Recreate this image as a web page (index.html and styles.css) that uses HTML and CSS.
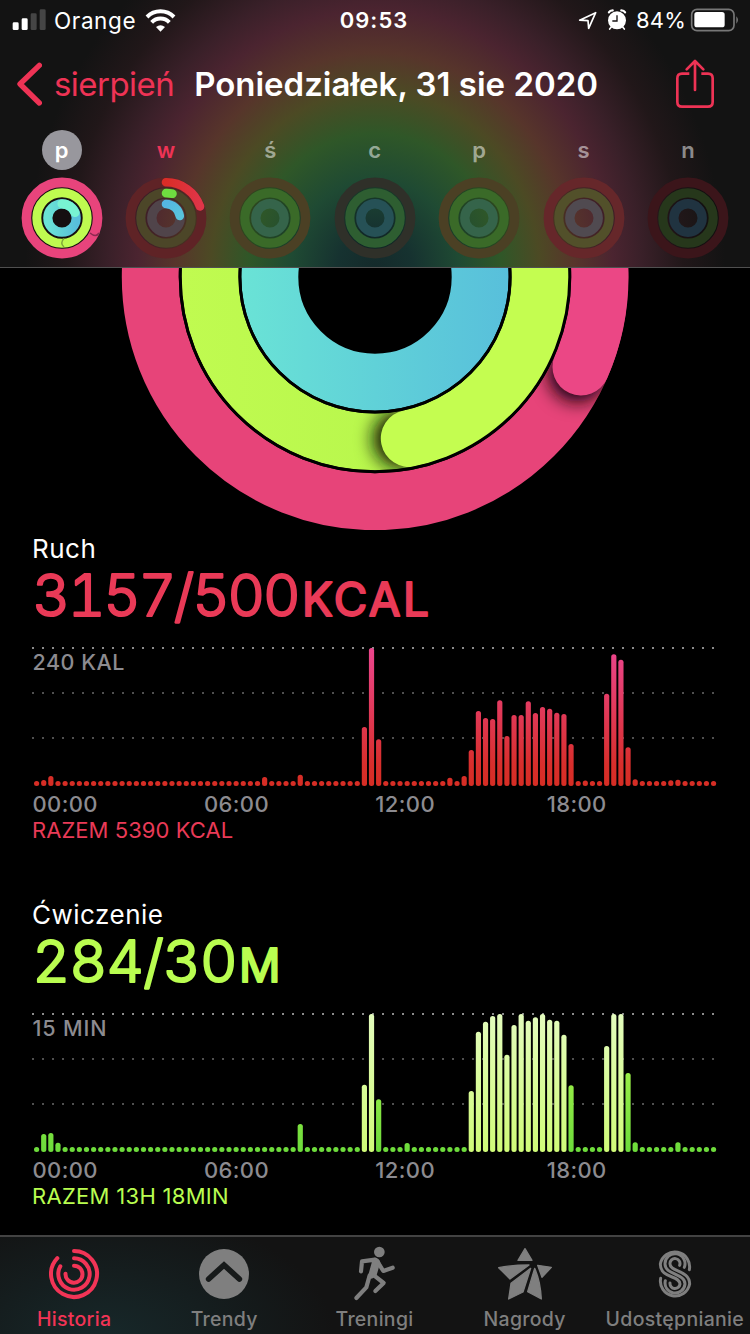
FILE: index.html
```html
<!DOCTYPE html>
<html lang="pl">
<head>
<meta charset="utf-8">
<title>Aktywność</title>
<link rel="stylesheet" href="styles.css">
</head>
<body>
<svg class="defs" width="0" height="0" aria-hidden="true">
  <symbol id="ring-empty" viewBox="0 0 82 82">
    <g fill="none">
      <circle cx="41" cy="41" r="25" stroke="#000" stroke-opacity=".16" stroke-width="22"/>
      <circle class="r-move" cx="41" cy="41" r="35.6" stroke-width="9.6"/>
      <circle class="r-exercise" cx="41" cy="41" r="25.2" stroke-width="9.200"/>
      <circle class="r-stand" cx="41" cy="41" r="14.2" stroke-width="9.400"/>
    </g>
  </symbol>
</svg>
<div class="screen">
  <header class="header">
    <div class="status">
      <div class="status-left">
        <svg width="34" height="22" viewBox="0 0 102 66"><g fill="#fff"><rect x="2" y="40" width="18" height="23" rx="4"/><rect x="29" y="28" width="18" height="35" rx="4"/></g><g fill="#454545"><rect x="56" y="13" width="18" height="50" rx="4"/><rect x="83" y="1" width="18" height="62" rx="4"/></g></svg>
        <span class="carrier">Orange</span>
        <svg class="wifi" width="31" height="23" viewBox="0 0 93 69"><g fill="none" stroke="#fff" stroke-width="12"><path d="M6 24A57 57 0 0 1 87 24"/><path d="M20 40A37 37 0 0 1 73 40"/></g><path fill="#fff" d="M33 54Q46.500 43 60 54L46.500 68Z"/></svg>
      </div>
      <span class="clock">09:53</span>
      <div class="status-right">
        <svg width="20" height="22" viewBox="0 0 60 66"><path d="M5 33.500L53 11L32 58L30 35Z" fill="none" stroke="#fff" stroke-width="5" stroke-linejoin="round"/></svg>
        <svg class="alarm" width="20" height="22" viewBox="0 0 60 66"><g fill="none" stroke="#fff" stroke-linecap="round"><path d="M6 10Q9 4 17 4M54 10Q51 4 43 4" stroke-width="7"/><path d="M13 54L8 60M47 54L52 60" stroke-width="5"/></g><circle cx="30" cy="34" r="27" fill="#fff"/><path d="M30 19V36H16" fill="none" stroke="#171314" stroke-width="4"/></svg>
        <span class="percent">84%</span>
        <svg class="battery" width="50" height="24" viewBox="0 0 150 72"><rect x="5" y="4" width="127" height="64" rx="16" fill="none" stroke="#777" stroke-width="5"/><rect x="13" y="12" width="91" height="46" rx="8" fill="#fff"/><path d="M139 25Q149 36 139 47Z" fill="#777"/></svg>
      </div>
    </div>
    <nav class="nav">
      <a class="back"><svg width="26" height="44" viewBox="0 0 78 132"><path d="M70 10L12 66L70 123" fill="none" stroke="currentColor" stroke-width="16" stroke-linecap="round" stroke-linejoin="round"/></svg><span>sierpień</span></a>
      <h1 class="title">Poniedziałek, 31 sie 2020</h1>
      <svg class="share" width="40" height="50" viewBox="0 0 120 150"><g fill="none" stroke="currentColor" stroke-width="8" stroke-linejoin="round"><path d="M43 44H21Q7 44 7 58V129Q7 143 21 143H99Q113 143 113 129V58Q113 44 99 44H79"/><path d="M60 93V8M35 31L60 6L85 31" stroke-linecap="round"/></g></svg>
    </nav>
    <div class="week">
      <div class="day selected"><span class="letter">p</span>
        <svg width="82" height="82" viewBox="0 0 82 82"><circle cx="41" cy="41" r="39" fill="#150f11"/><g fill="none"><circle cx="41" cy="41" r="35.600" stroke="#e8447c" stroke-width="9.600"/><circle cx="41" cy="41" r="25.200" stroke="#bffb50" stroke-width="9"/><circle cx="41" cy="41" r="14.200" stroke="url(#cyan-small)" stroke-width="9.200"/><path d="M69 56Q75 61 78 56" stroke="#8b2a50" stroke-width="1.500"/><path d="M43 61.500Q38.500 66 43 70" stroke="#7fa53b" stroke-width="1.500"/><path d="M41 26.800A14.200 14.200 0 0 1 54 35.500" stroke="#78f3d2" stroke-width="9.200" stroke-linecap="round"/></g></svg>
      </div>
      <div class="day today"><span class="letter">w</span>
        <svg width="82" height="82" viewBox="0 0 82 82"><use href="#ring-empty"/><g fill="none" stroke-linecap="round" stroke-width="8.600"><path d="M41 5.300A35.700 35.700 0 0 1 75 29.500" stroke="url(#red-small)"/><path d="M41 16.100A25 25 0 0 1 47.500 16.800" stroke="#6fdd40"/><path d="M41 27A14.200 14.200 0 0 1 54.800 39" stroke="url(#blue-small)"/></g></svg>
      </div>
      <div class="day green"><span class="letter">ś</span><svg width="82" height="82"><use href="#ring-empty"/></svg></div>
      <div class="day teal"><span class="letter">c</span><svg width="82" height="82"><use href="#ring-empty"/></svg></div>
      <div class="day green"><span class="letter">p</span><svg width="82" height="82"><use href="#ring-empty"/></svg></div>
      <div class="day plum"><span class="letter">s</span><svg width="82" height="82"><use href="#ring-empty"/></svg></div>
      <div class="day dark"><span class="letter">n</span><svg width="82" height="82"><use href="#ring-empty"/></svg></div>
    </div>
  </header>

  <main class="content">
    <svg class="rings" width="750" height="262" viewBox="0 268 750 262">
      <defs>
        <linearGradient id="cyan" x1="240" x2="510" y1="0" y2="0" gradientUnits="userSpaceOnUse"><stop offset="0" stop-color="#6ae3d6"/><stop offset=".5" stop-color="#60d1d8"/><stop offset="1" stop-color="#58bfdb"/></linearGradient>
        <linearGradient id="cyan-small" x1="0" x2="1" y1="0" y2="0"><stop offset="0" stop-color="#6ae3d6"/><stop offset="1" stop-color="#58bfdb"/></linearGradient>
        <linearGradient id="red-small" x1="0" x2="1" y1="0" y2="0"><stop offset="0" stop-color="#d92d27"/><stop offset="1" stop-color="#e03548"/></linearGradient>
        <linearGradient id="blue-small" x1="0" x2="1" y1="0" y2="1"><stop offset="0" stop-color="#54b6e2"/><stop offset="1" stop-color="#58c4dc"/></linearGradient>
        <linearGradient id="lime" x1="180" x2="440" y1="0" y2="0" gradientUnits="userSpaceOnUse"><stop offset="0" stop-color="#c0fb50"/><stop offset="1" stop-color="#b7f64c"/></linearGradient>
        <linearGradient id="move-bar" x1="0" x2="0" y1="154" y2="16" gradientUnits="userSpaceOnUse"><stop offset="0" stop-color="#d62d24"/><stop offset=".15" stop-color="#d82e2b"/><stop offset="1" stop-color="#ec468e"/></linearGradient>
        <linearGradient id="exercise-bar" x1="0" x2="0" y1="154" y2="16" gradientUnits="userSpaceOnUse"><stop offset="0" stop-color="#6cdb3b"/><stop offset=".6" stop-color="#9cef48"/><stop offset="1" stop-color="#baff4e"/></linearGradient>
        <linearGradient id="exercise-full" x1="0" x2="0" y1="154" y2="16" gradientUnits="userSpaceOnUse"><stop offset="0" stop-color="#d0fb78"/><stop offset="1" stop-color="#e3fcbd"/></linearGradient>
        <filter id="blur" x="-100%" y="-100%" width="300%" height="300%"><feGaussianBlur stdDeviation="9"/></filter>
        <mask id="move-band" maskUnits="userSpaceOnUse" x="100" y="0" width="550" height="550"><circle cx="375" cy="277" r="224.700" fill="none" stroke="#fff" stroke-width="57"/></mask>
        <mask id="exercise-band" maskUnits="userSpaceOnUse" x="100" y="0" width="550" height="550"><circle cx="375" cy="277" r="165" fill="none" stroke="#fff" stroke-width="57"/></mask>
      </defs>
      <g fill="none" stroke-width="57">
        <circle cx="375" cy="277" r="224.700" stroke="#e74479"/>
        <g mask="url(#move-band)"><circle cx="577.500" cy="373" r="29" fill="#16000a" filter="url(#blur)"/></g>
        <path d="M599.500 262A224.700 224.700 0 0 1 581 367" stroke="#eb4785" stroke-linecap="round"/>
        <circle cx="375" cy="277" r="165" stroke="url(#lime)"/>
        <g mask="url(#exercise-band)"><circle cx="402" cy="439" r="29" fill="#0d1400" filter="url(#blur)"/></g>
        <path d="M540 262A165 165 0 0 1 409.300 438.400" stroke="#c4fd50" stroke-linecap="round"/>
        <circle cx="375" cy="277" r="105.200" stroke="url(#cyan)"/>
        <g stroke="#000" stroke-width="3"><circle cx="375" cy="277" r="194.800"/><circle cx="375" cy="277" r="135.100"/></g>
      </g>
    </svg>

    <section class="metric move">
      <h2 class="name">Ruch</h2>
      <svg class="value" width="686" height="70"><text class="digits" x="0.500" y="54" textLength="268">3157/500</text><text class="unit" x="270" y="54" textLength="127">KCAL</text></svg>
      <svg class="chart" width="686" height="160" data-series="move"><g class="grid"></g><text class="scale" x="0.500" y="37.700" textLength="92">240 KAL</text><g class="bars"></g></svg>
      <div class="axis"><span>00:00</span><span>06:00</span><span>12:00</span><span>18:00</span></div>
      <p class="total">RAZEM 5390 KCAL</p>
    </section>

    <section class="metric exercise">
      <h2 class="name">Ćwiczenie</h2>
      <svg class="value" width="686" height="70"><text class="digits" x="0.500" y="54" textLength="205">284/30</text><text class="unit" x="207" y="54">M</text></svg>
      <svg class="chart" width="686" height="160" data-series="exercise"><g class="grid"></g><text class="scale" x="0.500" y="37.700" textLength="74">15 MIN</text><g class="bars"></g></svg>
      <div class="axis"><span>00:00</span><span>06:00</span><span>12:00</span><span>18:00</span></div>
      <p class="total wide">RAZEM 13H 18MIN</p>
    </section>
  </main>

  <footer class="tabs">
    <div class="tab active"><svg width="54" height="54" viewBox="0 0 162 162"><g fill="none" stroke="currentColor" stroke-width="12" stroke-linecap="round"><path d="M81 12A69 69 0 1 1 31 33.500"/><path d="M81 34A47 47 0 1 1 40 58"/><path d="M81 56A25.500 25.500 0 1 1 55.500 80"/></g></svg><span>Historia</span></div>
    <div class="tab"><svg width="54" height="54" viewBox="0 0 162 162"><circle cx="81" cy="81" r="75" fill="currentColor"/><path d="M35 96L81 54L127 96" fill="none" stroke="#171a1a" stroke-width="17" stroke-linecap="round"/></svg><span>Trendy</span></div>
    <div class="tab"><svg width="54" height="60" viewBox="6 12 162 180"><circle cx="103" cy="36" r="16" fill="currentColor"/><g fill="none" stroke="currentColor" stroke-width="12.500" stroke-linecap="round" stroke-linejoin="round"><path d="M48 94L51 64L90 59"/><path d="M97 64L115 93L143 83"/><path d="M84 104L116 129L91 153"/><path d="M74 106L64 142L34 174"/></g><path d="M80 55Q100 48 106 67L94 109L80 116L68 112L80 68Z" fill="currentColor"/></svg><span>Treningi</span></div>
    <div class="tab"><svg width="58" height="56" viewBox="363 66 174 168"><g fill="currentColor" stroke="currentColor" stroke-width="4" stroke-linejoin="round"><path d="M450 74L429 109H471Z"/><path d="M371 131Q410 123 462 123L405 165Z"/><path d="M488 124L529 130L501 160Z"/><path d="M467 133L408 178L401 225L444 204Z"/><path d="M479 133L458 203L499 225Q496 170 479 133Z"/></g></svg><span>Nagrody</span></div>
    <div class="tab"><svg width="36" height="54" viewBox="846 66 108 162"><g fill="none" stroke="currentColor" stroke-width="9" stroke-linecap="round"><path d="M943 134A44 44 0 1 0 856 117C856 162 915 150 915 177A15 15 0 1 1 885 174"/><path d="M928 127A30 30 0 1 0 870 117C870 150 930 145 930 177A30 30 0 1 1 871 167"/><path d="M914 121A15 15 0 1 0 885 117C885 142 944 134 944 177A44 44 0 1 1 857 160"/></g></svg><span>Udostępnianie</span></div>
  </footer>
</div>
<script src="charts.js"></script>
</body>
</html>
```

FILE: styles.css
```css
* { box-sizing: border-box; }
body { margin: 0; background: #000; }
.defs { position: absolute; }
.screen {
  width: 750px; height: 1334px; display: flex; flex-direction: column; overflow: hidden;
  background: #000; color: #fff; font-family: Inter, "Noto Sans", sans-serif;
}
h1, h2, p { margin: 0; font-weight: 400; }
svg { display: block; flex: none; }

.header {
  height: 268px; flex: none; border-bottom: 1px solid #505050;
  background: radial-gradient(ellipse 350px 385px at 375px 272px,
    #14292a 0%, #163230 11%, #1f4a33 24%, #2f5728 36%, #4c4a24 47%,
    #57352b 57%, #4b2430 68%, #3a2029 76%, #211719 88%, #131313 100%);
}
.status { height: 40px; display: grid; grid-template-columns: 1fr auto 1fr; align-items: center; padding: 0 11px 0 12px; font-size: 22px; }
.status-left, .status-right { display: flex; align-items: center; }
.status-right { justify-content: flex-end; }
.carrier { margin-left: 8px; font-size: 22.500px; letter-spacing: .6px; }
.wifi { margin-left: 9px; }
.clock { font-weight: 600; letter-spacing: 1px; margin-left: -2px; padding-right: 1px; }
.alarm { margin-left: 9px; }
.percent { margin-left: 9px; letter-spacing: .2px; }
.battery { margin-left: 4px; margin-right: -1px; }

.nav { height: 88px; display: flex; align-items: center; color: #ee3355; padding: 0 35px 0 16px; }
.back { display: flex; align-items: center; gap: 12px; font-size: 33px; letter-spacing: -.55px; }
.title { margin-left: 20px; font-size: 33px; font-weight: 600; color: #fff; white-space: nowrap; }
.share { margin-left: auto; }

.week { display: grid; grid-template-columns: repeat(7, 104.400px); padding-left: 9.400px; }
.day { display: flex; flex-direction: column; align-items: center; gap: 7px; padding-top: 2px; }
.letter { width: 40px; height: 40px; border-radius: 50%; line-height: 40px; text-align: center; font-size: 22px; font-weight: 600; color: rgba(255,255,255,.52); }
.selected .letter { background: #98979d; color: #fff; }
.today .letter { color: #ee3355; }
.r-move { stroke: var(--move); }
.r-exercise { stroke: var(--exercise); }
.r-stand { stroke: var(--stand); }
.today { --move: #5f2326; --exercise: #4c4628; --stand: #50444a; }
.green { --move: #4b4024; --exercise: #3a6a28; --stand: #35644a; }
.teal { --move: #2f3029; --exercise: #2e5e31; --stand: #265156; }
.plum { --move: #66272a; --exercise: #52502a; --stand: #504a50; }
.dark { --move: #3b151a; --exercise: #26371b; --stand: #203340; }

.content { height: 967px; flex: none; }
.metric { height: 366px; padding: 5px 32px 0; }
.move { color: #e93a57; }
.exercise { color: #b9fd50; }
.name { height: 27px; line-height: 27px; font-size: 26px; letter-spacing: .5px; color: #fff; }
.value { overflow: visible; }
.value text { fill: currentColor; stroke: currentColor; stroke-linejoin: round; }
.digits { font-size: 58px; font-weight: 300; stroke-width: 2.2px; font-variant-numeric: tabular-nums; }
.unit { font-size: 46px; font-weight: 400; stroke-width: 2px; }
.scale { font-size: 21.500px; font-weight: 500; fill: #8c8b90; }
.axis { height: 24px; display: grid; grid-template-columns: repeat(4, 171.400px); line-height: 24px; font-size: 22px; font-weight: 500; letter-spacing: .4px; padding-left: .5px; color: #8c8b90; }
.total { height: 29px; line-height: 29px; font-size: 22px; letter-spacing: .05px; }
.wide { letter-spacing: .3px; }

.tabs {
  height: 99px; flex: none; border-top: 2px solid #434343; display: grid; grid-template-columns: repeat(5, 150.200px);
  background: radial-gradient(ellipse 230px 130px at 105px 100px, #17282a, #131313), #131313; color: #7f7f7f;
  margin-left: -1px; width: 751px;
}
.tab { display: grid; grid-template-rows: 73px 19px; justify-items: center; align-items: center; font-size: 19.500px; font-weight: 500; white-space: nowrap; }
.tab span { line-height: 19px; letter-spacing: .3px; }
.active { color: #f23456; }
```

FILE: charts.js
```js
// Each day is 96 quarter-hour samples; values are bar heights out of 138.
const series = {
  move: {
    1: 6, 2: 10, 32: 9, 37: 11.3, 46: 59, 47: 138, 48: 46.7, 58: 8.3, 60: 10,
    61: 36, 62: 75, 63: 68, 64: 67, 65: 85.7, 66: 50, 67: 71, 68: 71, 69: 84.7,
    70: 73, 71: 79, 72: 77.3, 73: 73.3, 74: 72, 75: 42, 77: 5.6, 80: 92.3,
    81: 131.7, 82: 126.3, 83: 38.7, 84: 6.7, 89: 5.8, 90: 6.2
  },
  exercise: {
    1: 18, 2: 19, 3: 9.3, 37: 28, 46: 67.3, 47: 138, 48: 52.7, 52: 9, 61: 61,
    62: 120.3, 63: 130.3, 64: 136, 65: 138, 66: 97.3, 67: 127, 68: 138,
    69: 131.3, 70: 134.7, 71: 138, 72: 132.3, 73: 131.3, 74: 117.3, 75: 66.7,
    80: 106, 81: 138, 82: 138, 83: 79, 84: 9.7, 90: 9.7
  }
};
const isFull = i => i === 46 || i === 47 || (i >= 61 && i <= 74) || (i >= 80 && i <= 82);

function rect(parent, attrs) {
  const el = document.createElementNS('http://www.w3.org/2000/svg', 'rect');
  for (const k in attrs) el.setAttribute(k, attrs[k]);
  parent.appendChild(el);
}

document.querySelectorAll('.chart').forEach(chart => {
  const name = chart.dataset.series;
  const grid = chart.querySelector('.grid');
  const bars = chart.querySelector('.bars');
  [15, 60, 105].forEach((y, row) => {
    for (let k = 0; k < 69; k++) rect(grid, { x: k * 10, y, width: 2, height: 2, fill: row ? '#505050' : '#8c8c8c' });
  });
  for (let i = 0; i < 96; i++) {
    const h = series[name][i] || 5;
    const fill = name === 'move' ? 'move-bar' : isFull(i) ? 'exercise-full' : 'exercise-bar';
    rect(bars, { x: (2 + i * 7.126).toFixed(2), y: 154 - h, width: 5.2, height: h, rx: 2.5, fill: `url(#${fill})` });
  }
});
```
